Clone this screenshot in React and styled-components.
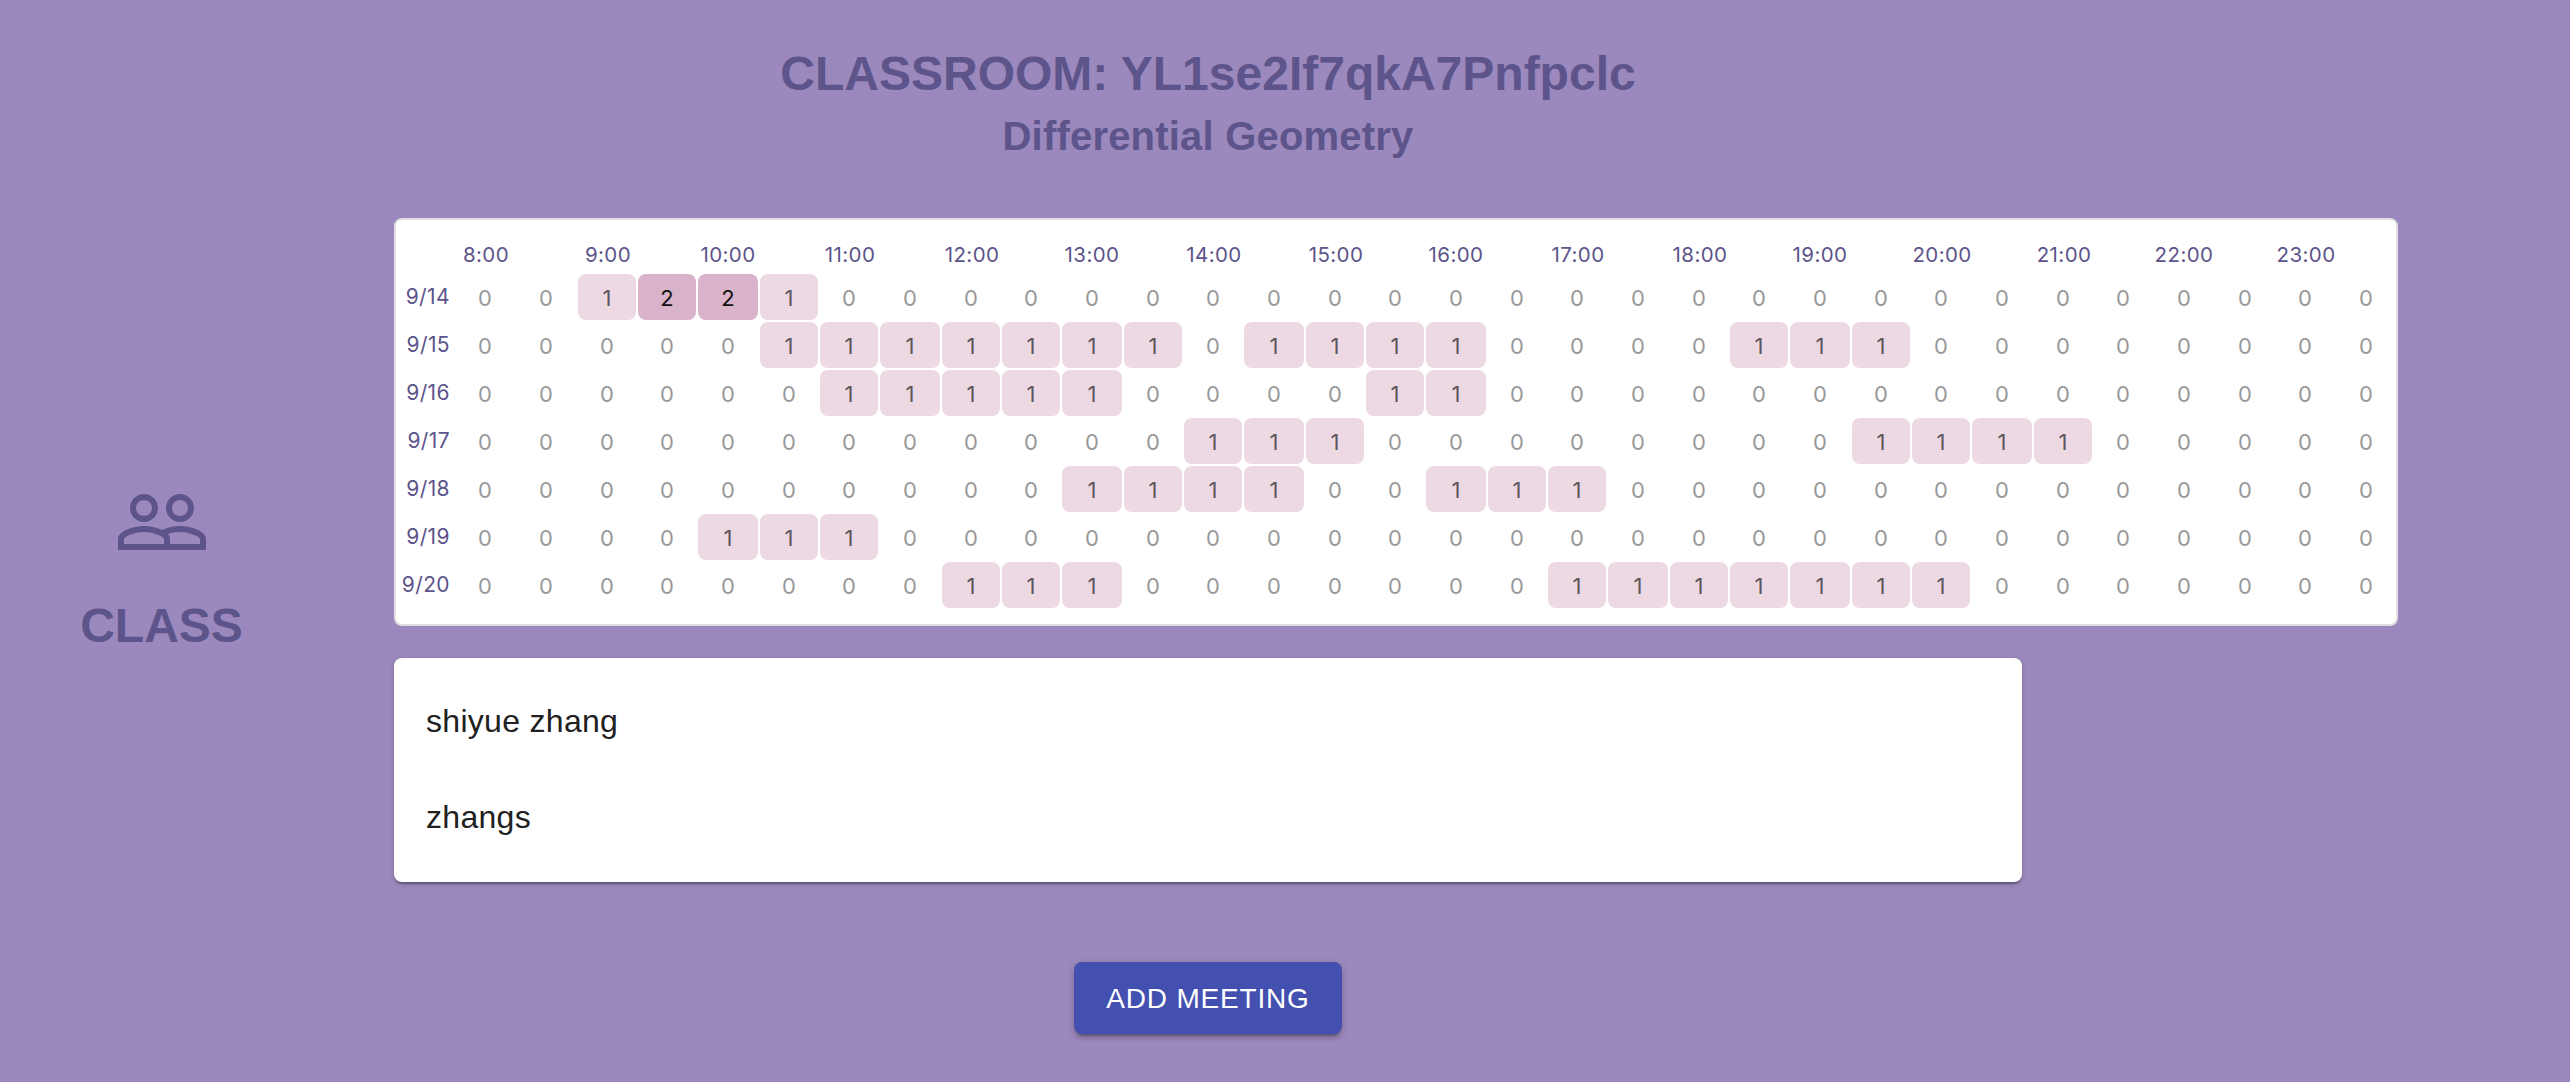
import React from "react";
import styled, { createGlobalStyle } from "styled-components";
import { MdPeopleOutline } from "react-icons/md";

const SLOT_COUNT = 32;
const SLOT_PITCH = 60.66;
const GRID_START = 456;
const GAP = 2;

// Slot edges are snapped to even pixels so that every gap stays crisp.
const snap = (value) => 2 * Math.round(value / 2);
const edge = (index) => snap(GRID_START + SLOT_PITCH * index);
const slotColumns = Array.from(
  { length: SLOT_COUNT },
  (_, i) => `${edge(i + 1) - edge(i) - GAP}px`
).join(" ");

const hours = Array.from({ length: 16 }, (_, i) => `${i + 8}:00`);

const days = [
  { date: "9/14", slots: "00122100000000000000000000000000" },
  { date: "9/15", slots: "00000111111101111000011100000000" },
  { date: "9/16", slots: "00000011111000011000000000000000" },
  { date: "9/17", slots: "00000000000011100000000111100000" },
  { date: "9/18", slots: "00000000001111001110000000000000" },
  { date: "9/19", slots: "00001110000000000000000000000000" },
  { date: "9/20", slots: "00000000111000000011111110000000" },
];

const members = ["shiyue zhang", "zhangs"];

const fills = { 0: "transparent", 1: "#ecd9e4", 2: "#d9b3ca" };
const inks = { 0: "#999999", 1: "#5e575b", 2: "#111111" };

const GlobalStyle = createGlobalStyle`
  body {
    margin: 0;
    background: #9b88bc;
    font-family: "Liberation Sans", Arial, sans-serif;
  }
`;

const Page = styled.div`
  display: grid;
  grid-template-columns: 324px 1fr;
  width: 2570px;
  height: 1082px;
  overflow: hidden;
  background: #9b88bc;
`;

const Sidebar = styled.aside`
  display: flex;
  flex-direction: column;
  align-items: center;
  padding-top: 474px;
  color: #5c548a;

  svg {
    width: 96px;
    height: 96px;
  }
`;

const SidebarTitle = styled.h1`
  margin: 28px 0 0;
  padding-right: 1px;
  font-size: 48px;
  line-height: 56px;
  font-weight: 700;
`;

const Main = styled.main`
  display: flex;
  flex-direction: column;
  width: 1628px;
  padding: 46px 0 0 70px;
`;

const Title = styled.h1`
  margin: 0;
  text-align: center;
  font-size: 48px;
  line-height: 56px;
  font-weight: 700;
  color: #5c548a;
`;

const Subtitle = styled.h2`
  margin: 11px 0 0;
  text-align: center;
  font-size: 40px;
  line-height: 46px;
  font-weight: 700;
  letter-spacing: 0.2px;
  color: #5c548a;
`;

const Schedule = styled.section`
  box-sizing: border-box;
  width: 2004px;
  height: 408px;
  margin-top: 59px;
  padding-top: 20px;
  border: 2px solid #e0e0e0;
  border-radius: 8px;
  background: #fff;
  font-family: Inter, Roboto, sans-serif;
`;

const ScheduleRow = styled.div`
  display: grid;
  grid-template-columns: 52px ${slotColumns};
  column-gap: ${GAP}px;
  height: ${(p) => (p.$header ? 34 : 46)}px;
  margin-bottom: ${(p) => (p.$header ? 0 : GAP)}px;
  padding-left: 6px;
`;

const HourLabel = styled.div`
  grid-column: ${(p) => p.$column};
  display: flex;
  justify-content: center;
  width: 58px;
  padding-left: 1px;
  font-size: 20.5px;
  line-height: 30px;
  letter-spacing: 0.4px;
  white-space: nowrap;
  color: #5c548a;
`;

const DayLabel = styled.div`
  display: flex;
  justify-content: flex-end;
  padding-right: 4px;
  font-size: 21px;
  line-height: 46px;
  letter-spacing: 0.4px;
  color: #5c548a;
`;

const Slot = styled.div`
  border-radius: 8px;
  text-align: center;
  font-size: 22px;
  line-height: 48px;
  height: 46px;
  background: ${(p) => fills[p.$count]};
  color: ${(p) => inks[p.$count]};
`;

const MemberList = styled.ul`
  margin: 32px 0 0;
  padding: 16px 0;
  list-style: none;
  border-radius: 8px;
  background: #fff;
  box-shadow: 0 4px 2px -2px rgba(0, 0, 0, 0.2), 0 2px 2px rgba(0, 0, 0, 0.14),
    0 2px 6px rgba(0, 0, 0, 0.12);
`;

const Member = styled.li`
  box-sizing: border-box;
  height: 96px;
  padding: 23px 32px 25px;
  font-size: 32px;
  line-height: 48px;
  letter-spacing: 0.3px;
  color: #212121;
`;

const AddButton = styled.button`
  align-self: center;
  box-sizing: border-box;
  width: 268px;
  height: 72px;
  margin-top: 80px;
  padding: 0;
  border: 0;
  border-radius: 8px;
  background: #4350af;
  color: #fff;
  font-family: inherit;
  font-size: 28px;
  line-height: 49px;
  letter-spacing: 0.8px;
  box-shadow: 0 6px 2px -4px rgba(0, 0, 0, 0.2), 0 4px 4px rgba(0, 0, 0, 0.14),
    0 2px 10px rgba(0, 0, 0, 0.12);
`;

export default function App() {
  return (
    <>
      <GlobalStyle />
      <Page>
        <Sidebar>
          <MdPeopleOutline />
          <SidebarTitle>CLASS</SidebarTitle>
        </Sidebar>
        <Main>
          <Title>CLASSROOM: YL1se2If7qkA7Pnfpclc</Title>
          <Subtitle>Differential Geometry</Subtitle>
          <Schedule>
            <ScheduleRow $header>
              {hours.map((hour, i) => (
                <HourLabel key={hour} $column={2 + i * 2}>
                  {hour}
                </HourLabel>
              ))}
            </ScheduleRow>
            {days.map(({ date, slots }) => (
              <ScheduleRow key={date}>
                <DayLabel>{date}</DayLabel>
                {slots.split("").map((count, i) => (
                  <Slot key={i} $count={count}>
                    {count}
                  </Slot>
                ))}
              </ScheduleRow>
            ))}
          </Schedule>
          <MemberList>
            {members.map((name) => (
              <Member key={name}>{name}</Member>
            ))}
          </MemberList>
          <AddButton>ADD MEETING</AddButton>
        </Main>
      </Page>
    </>
  );
}
